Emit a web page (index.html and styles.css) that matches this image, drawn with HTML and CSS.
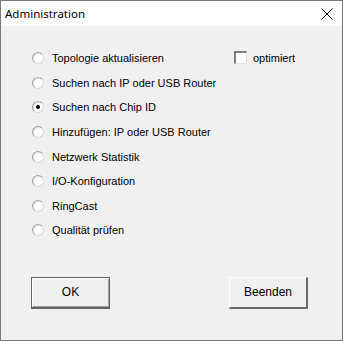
FILE: index.html
```html
<!DOCTYPE html>
<html lang="de">
<head>
  <meta charset="UTF-8" />
  <title>Administration</title>
  <link rel="stylesheet" href="styles.css">
</head>
<body>
  <div class="dialog">
    <div class="titlebar">
      <span class="title">Administration</span>
      <svg class="close" width="12" height="12" viewBox="0 0 12 12">
        <path d="M0.5 0.5 L11.5 11.5 M11.5 0.5 L0.5 11.5" stroke="#000" stroke-width="1" fill="none" />
      </svg>
    </div>
    <div class="content">
      <div class="options">
        <div class="options-list">
          <label class="radio"><span class="dot"></span>Topologie aktualisieren</label>
          <label class="radio"><span class="dot"></span>Suchen nach IP oder USB Router</label>
          <label class="radio"><span class="dot checked"></span>Suchen nach Chip ID</label>
          <label class="radio"><span class="dot"></span>Hinzufügen: IP oder USB Router</label>
          <label class="radio"><span class="dot"></span>Netzwerk Statistik</label>
          <label class="radio"><span class="dot"></span>I/O-Konfiguration</label>
          <label class="radio"><span class="dot"></span>RingCast</label>
          <label class="radio"><span class="dot"></span>Qualität prüfen</label>
        </div>
        <div class="side">
          <label class="check"><span class="box"></span>optimiert</label>
        </div>
      </div>
      <div class="buttons">
        <div class="btn default">OK</div>
        <div class="btn">Beenden</div>
      </div>
    </div>
  </div>
</body>
</html>
```

FILE: styles.css
```css
body {
  margin: 0;
  background: #f0f0f0;
  font-family: 'Liberation Sans', Arial, sans-serif;
  font-size: 11px;
  color: #000;
}
.dialog {
  width: 343px;
  height: 341px;
  box-sizing: border-box;
  border: 1px solid #7a7a7a;
  display: flex;
  flex-direction: column;
  background: #f0f0f0;
}
.titlebar {
  height: 25px;
  background: #fff;
  display: flex;
  align-items: center;
  justify-content: space-between;
  padding: 0 9px 0 4px;
  flex-shrink: 0;
}
.title {
  font-family: 'Noto Sans', sans-serif;
  font-size: 11.5px;
  margin-top: -1px;
}
.close {
  display: block;
  margin-top: 1px;
}
.content {
  flex: 1;
  display: flex;
  flex-direction: column;
  padding: 20px 0 0 31px;
}
.options {
  display: flex;
}
.options-list {
  width: 202px;
  display: flex;
  flex-direction: column;
}
.radio {
  height: 24.6px;
  display: flex;
  align-items: center;
  gap: 8px;
}
.dot {
  width: 12px;
  height: 12px;
  box-sizing: border-box;
  border-radius: 50%;
  border: 1px solid #a0a0a0;
  border-right-color: #d8d8d8;
  border-bottom-color: #d8d8d8;
  background: #fff;
  box-shadow: inset 1px 1px 0 #e4e4e4;
  position: relative;
}
.dot.checked::after {
  content: '';
  position: absolute;
  left: 3px;
  top: 3px;
  width: 4px;
  height: 4px;
  border-radius: 50%;
  background: #000;
}
.check {
  height: 24.6px;
  display: flex;
  align-items: center;
  gap: 6px;
}
.box {
  width: 13px;
  height: 13px;
  box-sizing: border-box;
  background: #fff;
  border: 2px solid #7f7f7f;
  border-right: 1px solid #e3e3e3;
  border-bottom: 1px solid #e3e3e3;
  margin-top: -1px;
}
.buttons {
  display: flex;
  gap: 119px;
  margin-top: 34px;
}
.btn {
  width: 79px;
  height: 32px;
  box-sizing: border-box;
  display: flex;
  align-items: center;
  justify-content: center;
  background: #f0f0f0;
  border-top: 1px solid #fff;
  border-left: 1px solid #fff;
  border-right: 2px solid #696969;
  border-bottom: 2px solid #696969;
  font-size: 12px;
}
.btn.default {
  margin-left: -1px;
  border: 1px solid #646464;
  border-bottom-width: 2px;
  box-shadow: inset 1px 1px 0 #fff, inset -1px -1px 0 #a0a0a0;
}
```
